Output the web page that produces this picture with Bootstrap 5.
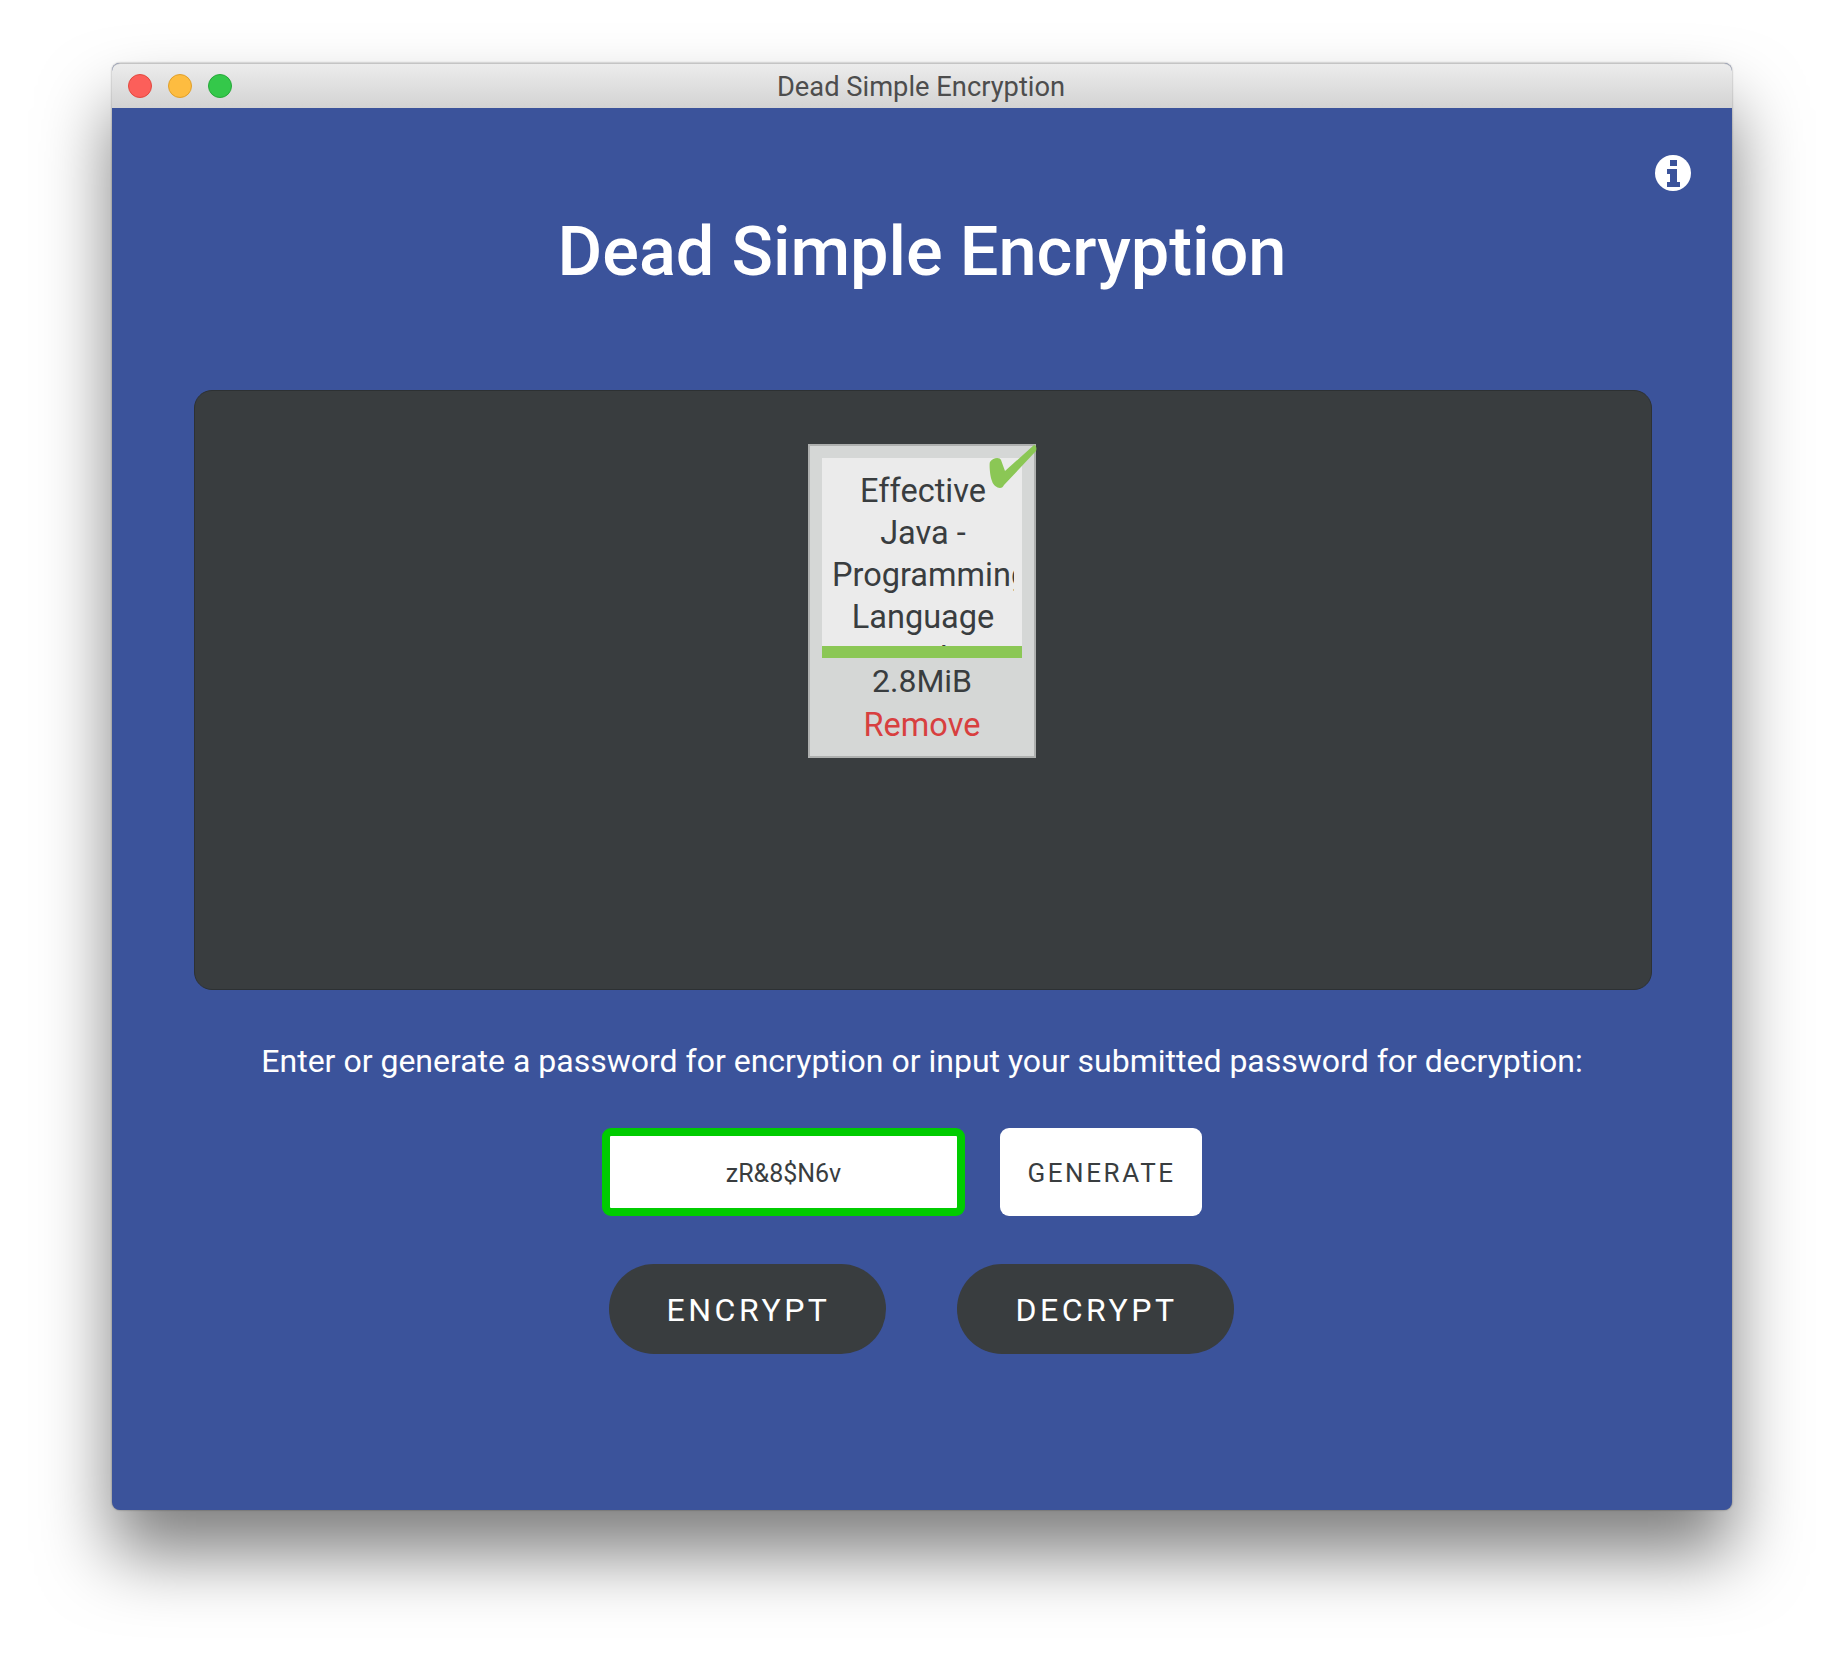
<!DOCTYPE html>
<html lang="en">
<head>
  <meta charset="UTF-8">
  <title>Dead Simple Encryption</title>
  <link href="https://cdn.jsdelivr.net/npm/bootstrap@5.3.0/dist/css/bootstrap.min.css" rel="stylesheet">
  <style>
    body { background: #fff; padding-top: 63px; height: 1670px; overflow: hidden; font-family: Roboto, "Liberation Sans", sans-serif; }
    .app-window { width: 1620px; height: 1447px; margin-left: 112px; border-radius: 8px; box-shadow: 0 44px 70px rgba(0,0,0,.5), 0 0 2px rgba(0,0,0,.45); background: #3b539b; }
    .title-bar { height: 45px; background: linear-gradient(#ececec, #d3d3d3); border-radius: 8px 8px 0 0; border-top: 1px solid #c4c4c4; padding-left: 16px; }
    .light { width: 24px; height: 24px; border-radius: 50%; border: 1px solid; }
    .light-red { background: #fc5f5a; border-color: #e2493f; }
    .light-yellow { background: #fdbc40; border-color: #e0a02b; }
    .light-green { background: #34c84a; border-color: #27a83a; }
    .title-text { font-size: 27.3px; color: #4d4d4d; left: 0; right: 2px; top: 0; bottom: 0; line-height: 46px; }
    .app-body { height: 1402px; padding-top: 47px; }
    .info-row { height: 36px; padding-right: 41px; }
    .app-title { font-size: 68.5px; font-weight: 500; color: #fff; line-height: 75px; margin: 23px 0 0; }
    .drop-zone { width: 1458px; height: 600px; margin: 101px 0 0 82px; background: #393d3f; border: 1px solid #2d3133; border-radius: 18px; padding: 53px 2px 0 0; }
    .file-tile { width: 228px; height: 314px; background: #d5d7d6; border: 2px solid #aeb0af; padding-top: 12px; color: #393d3f; font-size: 32px; line-height: 42px; }
    .file-name { width: 200px; height: 200px; margin: 0 auto; background: #ebebeb; padding: 12px 8px 0 10px; overflow: hidden; border-bottom: 12px solid #8bc755; font-size: 32.5px; }
    .file-name-clip { width: 182px; height: 176px; overflow: hidden; }
    .file-size { margin-top: 1px; line-height: 44px; }
    .file-remove { color: #d83f3f; line-height: 45px; font-size: 32.5px; }
    .tick { top: -2px; right: -3px; width: 48px; height: 46px; }
    .hint { font-size: 32px; color: #fff; line-height: 40px; margin: 51px 0 0; }
    .pw-row { margin-top: 47px; height: 88px; padding-left: 490px; gap: 35px; }
    .pw-input { width: 363px; height: 88px; border: 8px solid #00cc00; border-radius: 9px; background: #fff; color: #393d3f; font-size: 25px; text-align: center; padding: 2px 0 0; }
    .pw-input:focus { outline: 0; box-shadow: none; border-color: #00cc00; }
    .gen-btn { width: 202px; height: 88px; background: #fff; border: 0; border-radius: 9px; color: #393d3f; font-size: 26px; letter-spacing: 2.6px; padding: 2px 0 0 1px; }
    .action-row { margin-top: 48px; padding-left: 497px; gap: 71px; }
    .action-btn { width: 277px; height: 90px; background: #393d3f; color: #fff; border: 0; border-radius: 45px; font-size: 32px; letter-spacing: 3.5px; padding: 2px 0 0 2px; }
  </style>
</head>
<body>
  <div class="app-window">
    <div class="title-bar d-flex align-items-center gap-3 position-relative">
      <span class="light light-red"></span>
      <span class="light light-yellow"></span>
      <span class="light light-green"></span>
      <div class="title-text position-absolute text-center">Dead Simple Encryption</div>
    </div>
    <div class="app-body">
      <div class="info-row d-flex justify-content-end">
        <svg width="36" height="36" viewBox="0 0 36 36">
          <circle cx="18" cy="18" r="18" fill="#fff"/>
          <path fill="#3b539b" d="M15 5h7v6h-7zM12 14h10v13h3v5H12v-5h3v-8h-3z"/>
        </svg>
      </div>
      <h1 class="app-title text-center">Dead Simple Encryption</h1>
      <div class="drop-zone d-flex justify-content-center">
        <div class="file-tile text-center position-relative">
          <div class="file-name">
            <div class="file-name-clip">Effective Java - Programming Language Guide</div>
          </div>
          <div class="file-size">2.8MiB</div>
          <div class="file-remove">Remove</div>
          <svg class="tick position-absolute" viewBox="0 0 48 46">
            <path fill="#8bc755" d="M45 1L16 27L12 16C11 13 4 13 1 18C0 20 1 33 3 37C4 41 8 44 11 44C13 44 14 43 15 41L47 7C48 4 47 1 45 1Z"/>
          </svg>
        </div>
      </div>
      <p class="hint text-center">Enter or generate a password for encryption or input your submitted password for decryption:</p>
      <div class="pw-row d-flex">
        <input class="pw-input" type="text" value="zR&amp;8$N6v">
        <button class="gen-btn" type="button">GENERATE</button>
      </div>
      <div class="action-row d-flex">
        <button class="action-btn" type="button">ENCRYPT</button>
        <button class="action-btn" type="button">DECRYPT</button>
      </div>
    </div>
  </div>
  <script src="https://cdn.jsdelivr.net/npm/bootstrap@5.3.0/dist/js/bootstrap.bundle.min.js"></script>
</body>
</html>
